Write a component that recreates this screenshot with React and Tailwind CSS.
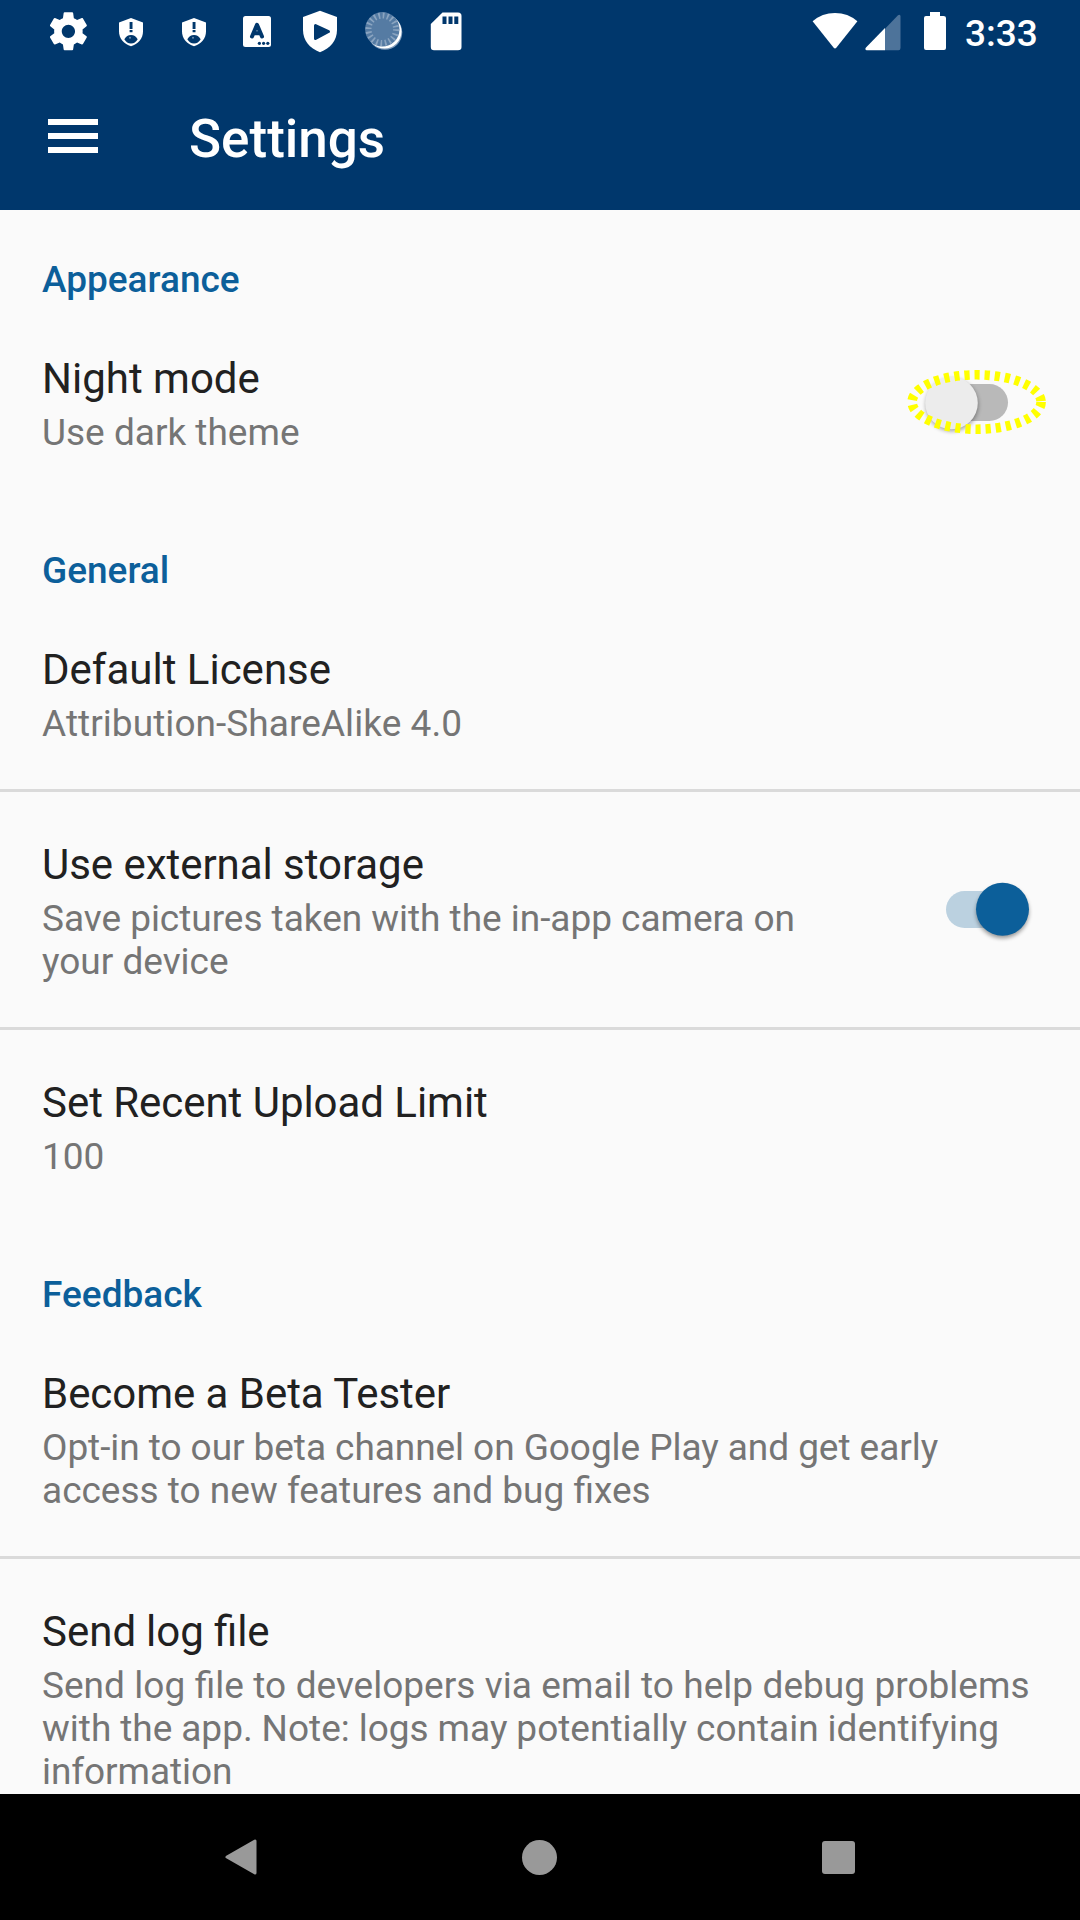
function Category({ children, className = "" }) {
  return (
    <h2 className={`px-[42px] text-[37px] leading-[43px] font-medium text-[#0c5f9a] ${className}`}>
      {children}
    </h2>
  );
}

function Row({ title, lines, control, className = "", titleClass = "" }) {
  return (
    <div className={`flex items-center justify-between pl-[42px] ${className}`}>
      <div className="whitespace-nowrap">
        <div className={`text-[42px] leading-[49px] text-[#212121] ${titleClass}`}>{title}</div>
        <div className="mt-2 text-[37px] leading-[43px] text-[#757575]">
          {lines.map(([text, tracking]) => (
            <div key={text} className={tracking}>{text}</div>
          ))}
        </div>
      </div>
      {control}
    </div>
  );
}

function SwitchOff() {
  return (
    <svg className="mb-[6px] -mt-[1px] h-[100px] w-[190px] shrink-0" viewBox="0 0 190 100">
      <defs>
        <filter id="soft" x="-30%" y="-30%" width="160%" height="160%">
          <feGaussianBlur stdDeviation="2" />
        </filter>
      </defs>
      <rect x="43" y="33" width="75" height="37" rx="18.5" fill="#b9b9b9" />
      <circle cx="62" cy="54" r="26.3" fill="#000" opacity=".35" filter="url(#soft)" />
      <circle cx="61.5" cy="52" r="26.3" fill="#ececec" />
      <ellipse cx="86.6" cy="51" rx="64.5" ry="27.2" fill="none" stroke="#ff0" strokeWidth="9.6" strokeDasharray="5.2 4.92" />
    </svg>
  );
}

function SwitchOn() {
  return (
    <svg className="mb-[4px] h-[100px] w-[160px] shrink-0" viewBox="0 0 160 100">
      <rect x="26" y="31" width="75" height="37" rx="18.5" fill="#bbd1e0" />
      <circle cx="82.5" cy="52" r="26.3" fill="#000" opacity=".4" filter="url(#soft)" />
      <circle cx="82.5" cy="49.3" r="26.5" fill="#0c5f9a" />
    </svg>
  );
}

function ShieldAlert() {
  return (
    <svg className="h-[30px] w-[26px]" viewBox="0 0 26 30">
      <path d="M13 1 L25 5.5 V14.5 C25 21.5 20 27 13 29.3 C6 27 1 21.5 1 14.5 V5.5 Z" fill="#fff" />
      <path d="M11.6 5h2.9v7h-2.9zM11.6 13h2.9v2.2h-2.9z" fill="#00376c" />
      <path d="M6.3 22.3 C8 19.5 10 18 13 18 C16 18 18 19.5 19.7 22.3 C18 25 16 26.6 13 26.6 C10 26.6 8 25 6.3 22.3Z" fill="#00376c" />
      <circle cx="12" cy="20.8" r="1" fill="#6e8fb0" />
    </svg>
  );
}

function StatusBar() {
  return (
    <div className="flex h-[63px] items-start">
      <svg className="mt-[10px] ml-[45px] h-[42px] w-[46px]" viewBox="0 0 46 42">
        <path transform="translate(0.6 -1.5) scale(1.9)" fill="#fff" d="M19.43 12.98c.04-.32.07-.64.07-.98s-.03-.66-.07-.98l2.11-1.65c.19-.15.24-.42.12-.64l-2-3.46c-.12-.22-.39-.3-.61-.22l-2.49 1c-.52-.4-1.08-.73-1.69-.98l-.38-2.65C14.46 2.18 14.25 2 14 2h-4c-.25 0-.46.18-.49.42l-.38 2.65c-.61.25-1.17.59-1.69.98l-2.49-1c-.23-.09-.49 0-.61.22l-2 3.46c-.13.22-.07.49.12.64l2.11 1.65c-.04.32-.07.65-.07.98s.03.66.07.98l-2.11 1.65c-.19.15-.24.42-.12.64l2 3.46c.12.22.39.3.61.22l2.49-1c.52.4 1.08.73 1.69.98l.38 2.65c.03.24.24.42.49.42h4c.25 0 .46-.18.49-.42l.38-2.65c.61-.25 1.17-.59 1.69-.98l2.49 1c.23.09.49 0 .61-.22l2-3.46c.12-.22.07-.49-.12-.64l-2.11-1.65zM12 15.5c-1.93 0-3.5-1.57-3.5-3.5s1.57-3.5 3.5-3.5 3.5 1.57 3.5 3.5-1.57 3.5-3.5 3.5z" />
      </svg>
      <div className="mt-[17px] ml-[27px]"><ShieldAlert /></div>
      <div className="mt-[17px] ml-[37px]"><ShieldAlert /></div>
      <svg className="mt-[16px] ml-[36px] h-[31px] w-[28px]" viewBox="0 0 28 31">
        <rect width="28" height="31" rx="2.5" fill="#fff" />
        <path d="M9 20.5 L14 8.8 L19 20.5 M10.7 17.3 H17.3" fill="none" stroke="#00376c" strokeWidth="4" strokeLinecap="round" strokeLinejoin="round" />
        <g fill="#00376c">
          <circle cx="16.4" cy="27.3" r="1.6" />
          <circle cx="20.6" cy="27.3" r="1.6" />
          <circle cx="24.8" cy="27.3" r="1.6" />
        </g>
      </svg>
      <svg className="mt-[10px] ml-[31px] h-[43px] w-[36px]" viewBox="0 0 36 43">
        <path d="M18 .8 L35 7 V20 C35 30 28.5 38.5 18 42.2 C7.5 38.5 1 30 1 20 V7 Z" fill="#fff" />
        <path d="M13.5 15.5 L26.5 21.5 L13.5 28.5Z" fill="#00376c" stroke="#00376c" strokeWidth="3" strokeLinejoin="round" />
      </svg>
      <svg className="mt-[12px] ml-[27px] h-[40px] w-[38px]" viewBox="0 0 38 40">
        <circle cx="20" cy="20.5" r="17.3" fill="#7d9aba" />
        <circle cx="19.5" cy="19.5" r="17" fill="#fff" />
        <circle cx="17.3" cy="17.3" r="17.2" fill="#557ba3" />
        <circle cx="17.3" cy="17.3" r="13.8" fill="none" stroke="#8aa4c0" strokeWidth="6" strokeDasharray="1.7 2.635" />
      </svg>
      <svg className="mt-[12px] ml-[27px] h-[39px] w-[32px]" viewBox="0 0 32 39">
        <path d="M12.5 .5 H28 Q31.5 .5 31.5 4 V35 Q31.5 38.3 28 38.3 H4 Q.8 38.3 .8 35 V12Z" fill="#fff" />
        <path d="M12.5 4.5h4v7.5h-4zM18.5 4.5h4v7.5h-4zM24.3 4.5h4v7.5h-4z" fill="#00376c" />
      </svg>
      <svg className="mt-[12px] ml-auto h-[38px] w-[46px]" viewBox="0 0 46 38">
        <path d="M.6 9.3 Q10 1 23 1 Q36 1 45.4 9.3 L24.3 35.8 Q23 37.3 21.7 35.8Z" fill="#fff" />
      </svg>
      <svg className="mt-[14px] ml-[7px] h-[37px] w-[36px]" viewBox="0 0 36 37">
        <path d="M20 14.8 L33 1.3 Q35.5 0 35.5 2.5 V34 Q35.5 36.2 33.5 36.2 H20Z" fill="#4d739a" />
        <path d="M20 14 V36.2 H1.5 Q-.5 35.5 1 33.5Z" fill="#fff" />
      </svg>
      <svg className="mt-[12px] ml-[22px] h-[38px] w-[24px]" viewBox="0 0 24 38">
        <path d="M7 0H17V4H20.5Q23 4 23 6V36Q23 38 21 38H3Q1 38 1 36V6Q1 4 3 4H7Z" fill="#fff" />
      </svg>
      <div className="mt-[11px] ml-[18px] w-[115px] text-[37px] leading-[45px] font-medium">3:33</div>
    </div>
  );
}

export default function App() {
  return (
    <div className="flex h-[1920px] w-[1080px] flex-col overflow-hidden bg-[#fafafa] font-['Roboto',sans-serif]">
      <header className="h-[210px] shrink-0 bg-[#00376c] text-white">
        <StatusBar />
        <div className="flex h-[147px] items-start">
          <div className="mt-[56px] ml-12 flex w-[50px] flex-col gap-[8px]">
            <div className="h-[6px] bg-white" />
            <div className="h-[6px] bg-white" />
            <div className="h-[6px] bg-white" />
          </div>
          <h1 className="mt-[45px] ml-[91px] text-[53px] leading-[62px] font-medium">Settings</h1>
        </div>
      </header>

      <main className="min-h-0 flex-1 overflow-hidden">
        <Category className="pt-[48px]">Appearance</Category>
        <Row className="mt-[53px] h-[100px]" title="Night mode" lines={[["Use dark theme", ""]]} control={<SwitchOff />} />
        <Category className="pt-[95px]">General</Category>
        <Row className="mt-[53px]" title="Default License" lines={[["Attribution-ShareAlike 4.0", "tracking-[0.06px]"]]} />
        <div className="mt-[44px] h-[3px] bg-[#dadada]" />
        <Row
          className="mt-[48px]"
          title="Use external storage"
          titleClass="tracking-[-0.04px]"
          lines={[
            ["Save pictures taken with the in-app camera on", "tracking-[-0.03px]"],
            ["your device", ""],
          ]}
          control={<SwitchOn />}
        />
        <div className="mt-[44px] h-[3px] bg-[#dadada]" />
        <Row className="mt-[48px]" title="Set Recent Upload Limit" titleClass="tracking-[-0.04px]" lines={[["100", ""]]} />
        <Category className="pt-[95px]">Feedback</Category>
        <Row
          className="mt-[53px]"
          title="Become a Beta Tester"
          titleClass="tracking-[-0.04px]"
          lines={[
            ["Opt-in to our beta channel on Google Play and get early", "tracking-[-0.06px]"],
            ["access to new features and bug fixes", ""],
          ]}
        />
        <div className="mt-[44px] h-[3px] bg-[#dadada]" />
        <Row
          className="mt-[48px]"
          title="Send log file"
          titleClass="[word-spacing:-0.4px]"
          lines={[
            ["Send log file to developers via email to help debug problems", "[word-spacing:0.3px]"],
            ["with the app. Note: logs may potentially contain identifying", "[word-spacing:-0.25px]"],
            ["information", "tracking-[-0.08px]"],
          ]}
        />
      </main>

      <nav className="flex h-[126px] shrink-0 items-center bg-black pl-[224px]">
        <svg className="h-[38px] w-[34px]" viewBox="0 0 34 38">
          <path d="M3 19 L31 3 V35Z" fill="#999" stroke="#999" strokeWidth="3" strokeLinejoin="round" />
        </svg>
        <div className="ml-[264px] size-[35px] rounded-full bg-[#999]" />
        <div className="ml-[264.5px] size-[33px] rounded-[3px] bg-[#999]" />
      </nav>
    </div>
  );
}
